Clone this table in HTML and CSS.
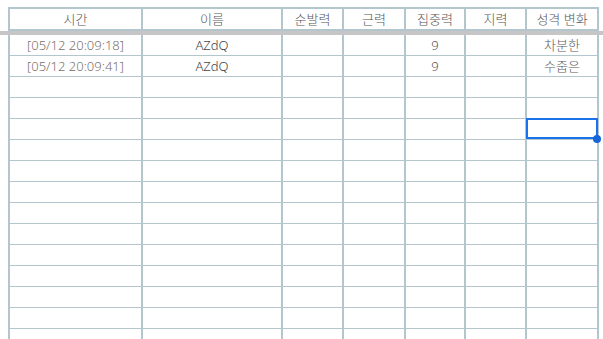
FILE: index.html
```html
<!DOCTYPE html>
<html lang="ko">
<head>
    <meta charset="UTF-8">
    <meta name="viewport" content="width=device-width, initial-scale=1.0">
    <title>성격 변화 기록</title>
    <link rel="stylesheet" href="styles.css">
</head>
<body>
    <div class="sheet">
        <div class="grid head">
            <div class="cell">시간</div>
            <div class="cell">이름</div>
            <div class="cell">순발력</div>
            <div class="cell">근력</div>
            <div class="cell">집중력</div>
            <div class="cell">지력</div>
            <div class="cell">성격 변화</div>
        </div>
        <div class="freeze"></div>
        <div class="grid rows" id="rows"></div>
    </div>

    <script>
        const logData = [
            { time: "[05/12 20:09:18]", name: "AZdQ", focus: "9", change: "차분한" },
            { time: "[05/12 20:09:41]", name: "AZdQ", focus: "9", change: "수줍은" }
        ];
        const totalRows = 15, selectedRow = 4, selectedCol = 6;

        function renderRows() {
            const grid = document.getElementById("rows");
            for (let r = 0; r < totalRows; r++) {
                const item = logData[r] || {};
                const values = [item.time, item.name, "", "", item.focus, "", item.change];
                values.forEach((val, c) => {
                    let cell = document.createElement("div");
                    cell.className = "cell";
                    if (c === 0) cell.classList.add("time");
                    if (c === 1) cell.classList.add("name");
                    if (c === 6) cell.classList.add("change");
                    if (r === selectedRow && c === selectedCol) cell.classList.add("selected");
                    cell.textContent = val || "";
                    grid.appendChild(cell);
                });
            }
        }

        renderRows();
    </script>
</body>
</html>
```

FILE: styles.css
```css
body {
    margin: 0;
    font-family: "Noto Sans", "Noto Sans CJK KR", sans-serif;
    font-size: 13px;
    font-weight: 300;
    color: #555;
    background: #fff;
    overflow: hidden;
}
.sheet {
    padding-top: 7px;
}
.grid {
    display: grid;
    grid-template-columns: 133px 140px 61px 62px 60px 61px 72px;
    width: max-content;
    margin-left: 8px;
    border-left: 2px solid #b3c6cd;
}
.head {
    border-top: 2px solid #b3c6cd;
}
.cell {
    box-sizing: border-box;
    height: 21px;
    line-height: 20px;
    text-align: center;
    white-space: nowrap;
    overflow: hidden;
    border-right: 2px solid #b3c6cd;
    border-bottom: 1px solid #b3c6cd;
}
.head .cell {
    height: 22px;
    border-bottom-width: 2px;
    color: #555;
}
.freeze {
    height: 4px;
    background: #c6c6c6;
}
.time {
    color: #7a716a;
}
.name {
    color: #444;
}
.change {
    color: #5a5a5a;
}

/* active cell outline with fill handle */
.selected {
    position: relative;
    overflow: visible;
}
.selected::before {
    content: "";
    position: absolute;
    top: -1px;
    left: -1px;
    width: 72px;
    height: 21px;
    box-sizing: border-box;
    border: 2px solid #1a73e8;
}
.selected::after {
    content: "";
    position: absolute;
    left: 66px;
    top: 16px;
    width: 8px;
    height: 8px;
    border-radius: 50%;
    background: #1765d8;
}
```
